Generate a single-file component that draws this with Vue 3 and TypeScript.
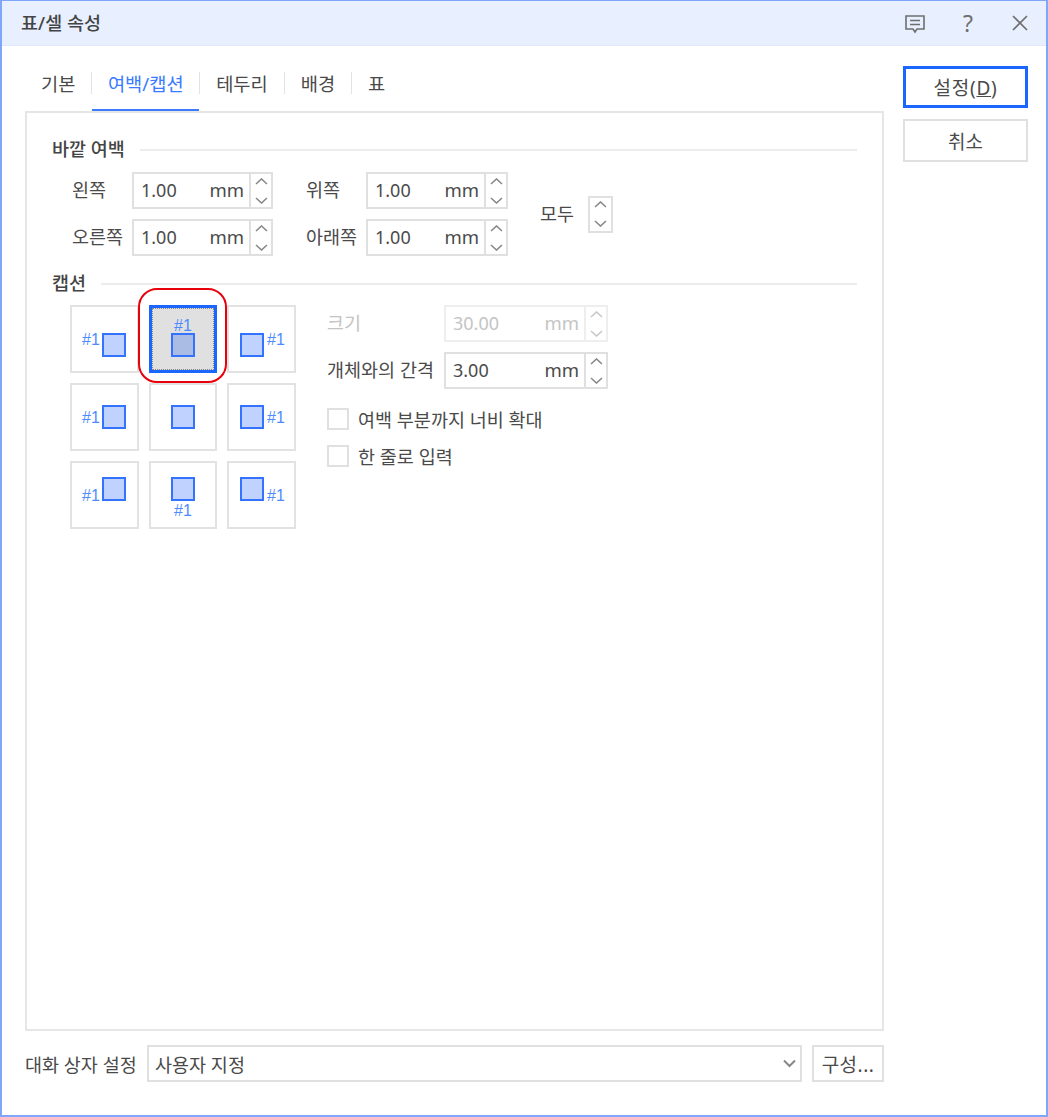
<script setup lang="ts">
interface Cell { rx: number; ry: number; tx?: number; ty?: number; sel?: boolean }
const tabs: string[] = ['기본', '여백/캡션', '테두리', '배경', '표']
const cells: Cell[] = [
  { rx: 32, ry: 28, tx: 12, ty: 40 },
  { rx: 22, ry: 28, tx: 25, ty: 26, sel: true },
  { rx: 13, ry: 28, tx: 40, ty: 40 },
  { rx: 32, ry: 22, tx: 12, ty: 40 },
  { rx: 22, ry: 22 },
  { rx: 13, ry: 22, tx: 40, ty: 40 },
  { rx: 32, ry: 16, tx: 12, ty: 40 },
  { rx: 22, ry: 16, tx: 25, ty: 55 },
  { rx: 13, ry: 16, tx: 40, ty: 40 },
]
</script>

<template>
  <div class="window">
    <header class="title">
      <span class="title-text">표/셀 속성</span>
      <svg class="ic-note" width="22" height="22" viewBox="0 0 22 22" fill="none" stroke="#6e6e6e" stroke-width="1.6">
        <path d="M2 3h18v13h-7l-2 3-2-3H2z" />
        <path d="M6 7.5h10M6 11.5h10" />
      </svg>
      <span class="ic-help">?</span>
      <svg class="ic-close" width="16" height="16" viewBox="0 0 16 16" fill="none" stroke="#6e6e6e" stroke-width="1.7">
        <path d="M1 1l14 14M15 1L1 15" />
      </svg>
    </header>

    <div class="body">
      <div class="main">
        <nav class="tabs">
          <template v-for="(t, i) in tabs" :key="t">
            <span class="tab" :class="{ active: i === 1 }">{{ t }}</span>
            <i v-if="i < tabs.length - 1" class="tab-sep"></i>
          </template>
        </nav>

        <section class="panel">
          <div class="head"><span>바깥 여백</span><i></i></div>
          <div class="margins">
            <span class="lab">왼쪽</span>
            <div class="field w141">
              <span class="val">1.00</span><span class="unit">mm</span>
              <span class="spin"><svg width="13" height="7" viewBox="0 0 13 7"><path d="M1 6l5.500-5 5.500 5" /></svg><svg width="13" height="7" viewBox="0 0 13 7"><path d="M1 1l5.500 5 5.500-5" /></svg></span>
            </div>
            <span class="lab">위쪽</span>
            <div class="field w142">
              <span class="val">1.00</span><span class="unit">mm</span>
              <span class="spin"><svg width="13" height="7" viewBox="0 0 13 7"><path d="M1 6l5.500-5 5.500 5" /></svg><svg width="13" height="7" viewBox="0 0 13 7"><path d="M1 1l5.500 5 5.500-5" /></svg></span>
            </div>
            <div class="all">
              <span class="all-lab">모두</span>
              <span class="spin solo"><svg width="13" height="7" viewBox="0 0 13 7"><path d="M1 6l5.500-5 5.500 5" /></svg><svg width="13" height="7" viewBox="0 0 13 7"><path d="M1 1l5.500 5 5.500-5" /></svg></span>
            </div>
            <span class="lab">오른쪽</span>
            <div class="field w141">
              <span class="val">1.00</span><span class="unit">mm</span>
              <span class="spin"><svg width="13" height="7" viewBox="0 0 13 7"><path d="M1 6l5.500-5 5.500 5" /></svg><svg width="13" height="7" viewBox="0 0 13 7"><path d="M1 1l5.500 5 5.500-5" /></svg></span>
            </div>
            <span class="lab">아래쪽</span>
            <div class="field w142">
              <span class="val">1.00</span><span class="unit">mm</span>
              <span class="spin"><svg width="13" height="7" viewBox="0 0 13 7"><path d="M1 6l5.500-5 5.500 5" /></svg><svg width="13" height="7" viewBox="0 0 13 7"><path d="M1 1l5.500 5 5.500-5" /></svg></span>
            </div>
          </div>

          <div class="head second"><span>캡션</span><i></i></div>
          <div class="caption">
            <div class="grid">
              <button v-for="(c, i) in cells" :key="i" class="cell" :class="{ sel: c.sel }">
                <svg width="69" height="68" viewBox="0 0 69 68">
                  <rect :x="c.rx + 1" :y="c.ry + 1" width="22" height="22" :fill="c.sel ? '#aabce3' : '#c0d2ff'" stroke="#3373ff" stroke-width="2" />
                  <text v-if="c.tx !== undefined" :x="c.tx" :y="c.ty" class="num">#1</text>
                </svg>
              </button>
              <div class="ring"></div>
            </div>
            <div class="opts">
              <div class="opt-row disabled">
                <span class="opt-lab">크기</span>
                <div class="field w164">
                  <span class="val">30.00</span><span class="unit">mm</span>
                  <span class="spin"><svg width="13" height="7" viewBox="0 0 13 7"><path d="M1 6l5.500-5 5.500 5" /></svg><svg width="13" height="7" viewBox="0 0 13 7"><path d="M1 1l5.500 5 5.500-5" /></svg></span>
                </div>
              </div>
              <div class="opt-row">
                <span class="opt-lab">개체와의 간격</span>
                <div class="field w164">
                  <span class="val">3.00</span><span class="unit">mm</span>
                  <span class="spin"><svg width="13" height="7" viewBox="0 0 13 7"><path d="M1 6l5.500-5 5.500 5" /></svg><svg width="13" height="7" viewBox="0 0 13 7"><path d="M1 1l5.500 5 5.500-5" /></svg></span>
                </div>
              </div>
              <label class="check first"><i></i><span>여백 부분까지 너비 확대</span></label>
              <label class="check"><i></i><span>한 줄로 입력</span></label>
            </div>
          </div>
        </section>

        <footer class="foot">
          <span class="foot-lab">대화 상자 설정</span>
          <div class="select">
            <span>사용자 지정</span>
            <svg width="13" height="9" viewBox="0 0 13 9" fill="none" stroke="#888" stroke-width="2"><path d="M1 1.500l5.500 5.500 5.500-5.500" /></svg>
          </div>
          <button class="btn cfg">구성...</button>
        </footer>
      </div>

      <aside class="side">
        <button class="btn ok">설정(<u>D</u>)</button>
        <button class="btn cancel">취소</button>
      </aside>
    </div>
  </div>
</template>

<style scoped>
.window {
  box-sizing: border-box;
  width: 1048px;
  height: 1117px;
  border: 2px solid #7fa6f8;
  border-top-width: 1px;
  background: #fff;
  font-family: "Noto Sans", "Noto Sans CJK KR", sans-serif;
  font-size: 18.500px;
  color: #4a4a4a;
  display: flex;
  flex-direction: column;
  overflow: hidden;
}
.title {
  box-sizing: border-box;
  height: 45px;
  flex: none;
  background: #e8f0ff;
  border-bottom: 1px solid #dfe8fa;
  display: flex;
  align-items: center;
  padding: 0 18px 0 19px;
}
.title-text {
  flex: 1;
  font-size: 18.500px;
  font-weight: 500;
  color: #444;
  margin-top: -2px;
}
.ic-note { margin-right: 35px; margin-top: 2px; }
.ic-help { font-size: 23px; color: #707070; margin-right: 37px; width: 14px; text-align: center; }
.ic-close { flex: none; }

.body { display: flex; flex: 1; min-height: 0; }
.main { width: 859px; margin-left: 23px; flex: none; }
.side {
  width: 125px;
  margin-left: 19px;
  padding-top: 20px;
  display: flex;
  flex-direction: column;
  gap: 11px;
}

.tabs { display: flex; align-items: center; height: 47px; margin-top: 18px; }
.tab {
  height: 47px;
  line-height: 40px;
  padding: 0 16px;
  box-sizing: border-box;
  white-space: nowrap;
  font-size: 18.700px;
}
.tab.active { color: #3a7bff; border-bottom: 2px solid #3a7bff; padding: 0 15.500px; }
.tab-sep { width: 1px; height: 22px; background: #e2e2e2; margin-bottom: 9px; flex: none; }

.panel {
  box-sizing: border-box;
  height: 920px;
  border: 2px solid #e6e6e6;
  padding: 26px 25px 0;
}
.head { display: flex; align-items: center; height: 22px; gap: 15px; font-weight: 500; font-size: 18.500px; color: #444; }
.head span { margin-top: -4px; }
.head i { flex: 1; height: 2px; background: #ececec; }
.head.second { margin-top: 17px; }

.margins {
  margin: 11px 0 0 20px;
  display: grid;
  grid-template-columns: 60px 141px 93px 142px auto;
  row-gap: 10px;
  align-items: center;
}
.lab { white-space: nowrap; font-size: 18.500px; margin-top: -3px; }
.margins > .field + .lab { margin-left: 33px; }
.all {
  grid-column: 5;
  grid-row: 1 / span 2;
  margin-left: 32px;
  display: flex;
  align-items: center;
}
.all-lab { width: 48px; font-size: 18.500px; margin-top: -3px; }

.field {
  box-sizing: border-box;
  height: 37px;
  border: 2px solid #e0e0e0;
  display: flex;
  align-items: center;
  padding-left: 7px;
}
.w141 { width: 141px; }
.w142 { width: 142px; }
.w164 { width: 164px; }
.val { flex: 1; font-size: 18px; margin-top: -2px; }
.unit { font-size: 18.500px; margin-right: 5px; margin-top: -2px; }
.spin {
  box-sizing: border-box;
  width: 22px;
  height: 33px;
  border-left: 2px solid #e0e0e0;
  display: flex;
  flex-direction: column;
  align-items: center;
  justify-content: center;
  gap: 12px;
  flex: none;
}
.spin.solo { width: 25px; height: 37px; border: 2px solid #e0e0e0; }
.spin path { fill: none; stroke: #888; stroke-width: 1.6; }

.caption { display: flex; margin: 10px 0 0 18px; }
.grid {
  position: relative;
  display: grid;
  grid-template-columns: 69px 68px 69px;
  grid-auto-rows: 68px;
  gap: 10px;
  flex: none;
  height: 224px;
}
.cell {
  position: relative;
  padding: 0;
  border: 0;
  background: #fff;
  box-shadow: inset 0 0 0 2px #e2e2e2;
  overflow: visible;
}
.cell svg { display: block; position: relative; z-index: 1; }
.num { font-family: "Liberation Sans", sans-serif; font-size: 16px; fill: #4d8bff; }
.cell.sel { background: #e0e0e0; box-shadow: inset 0 0 0 3px #1a66ff; }
.cell.sel::after {
  content: "";
  position: absolute;
  inset: 3px;
  border: 1px dotted #888;
}
.ring {
  position: absolute;
  left: 68px;
  top: -17px;
  width: 89px;
  height: 95px;
  box-sizing: border-box;
  border: 2.500px solid #e8000b;
  border-radius: 19px;
  pointer-events: none;
}

.opts { margin-left: 31px; display: flex; flex-direction: column; gap: 10px; }
.opt-row { display: flex; align-items: center; }
.opt-lab { width: 117px; white-space: nowrap; font-size: 18.500px; margin-top: -3px; }
.disabled .opt-lab, .disabled .val, .disabled .unit { color: #c4c4c4; }
.disabled .field, .disabled .spin { border-color: #eee; }
.disabled .spin path { stroke: #c8c8c8; }
.check { display: flex; align-items: center; font-size: 18.500px; height: 22px; gap: 9px; margin-top: 5px; }
.check.first { margin-top: 9px; }
.check i { box-sizing: border-box; width: 22px; height: 22px; border: 2px solid #e0e0e0; flex: none; }

.foot { display: flex; align-items: center; margin-top: 14px; height: 37px; }
.foot-lab { width: 122px; font-size: 18.500px; white-space: nowrap; }
.select {
  box-sizing: border-box;
  width: 655px;
  height: 37px;
  border: 2px solid #e0e0e0;
  display: flex;
  align-items: center;
  justify-content: space-between;
  padding: 0 4px 0 6px;
  font-size: 18.500px;
}
.btn {
  font: inherit;
  color: #4a4a4a;
  background: #fff;
  box-sizing: border-box;
  border: 2px solid #e0e0e0;
  padding: 0;
}
.cfg { width: 72px; height: 37px; margin-left: 10px; font-size: 19px; letter-spacing: 0.500px; }
.ok { height: 42px; border: 3px solid #1a66ff; font-size: 19px; letter-spacing: 0.800px; }
.cancel { height: 43px; font-size: 19px; }
</style>
